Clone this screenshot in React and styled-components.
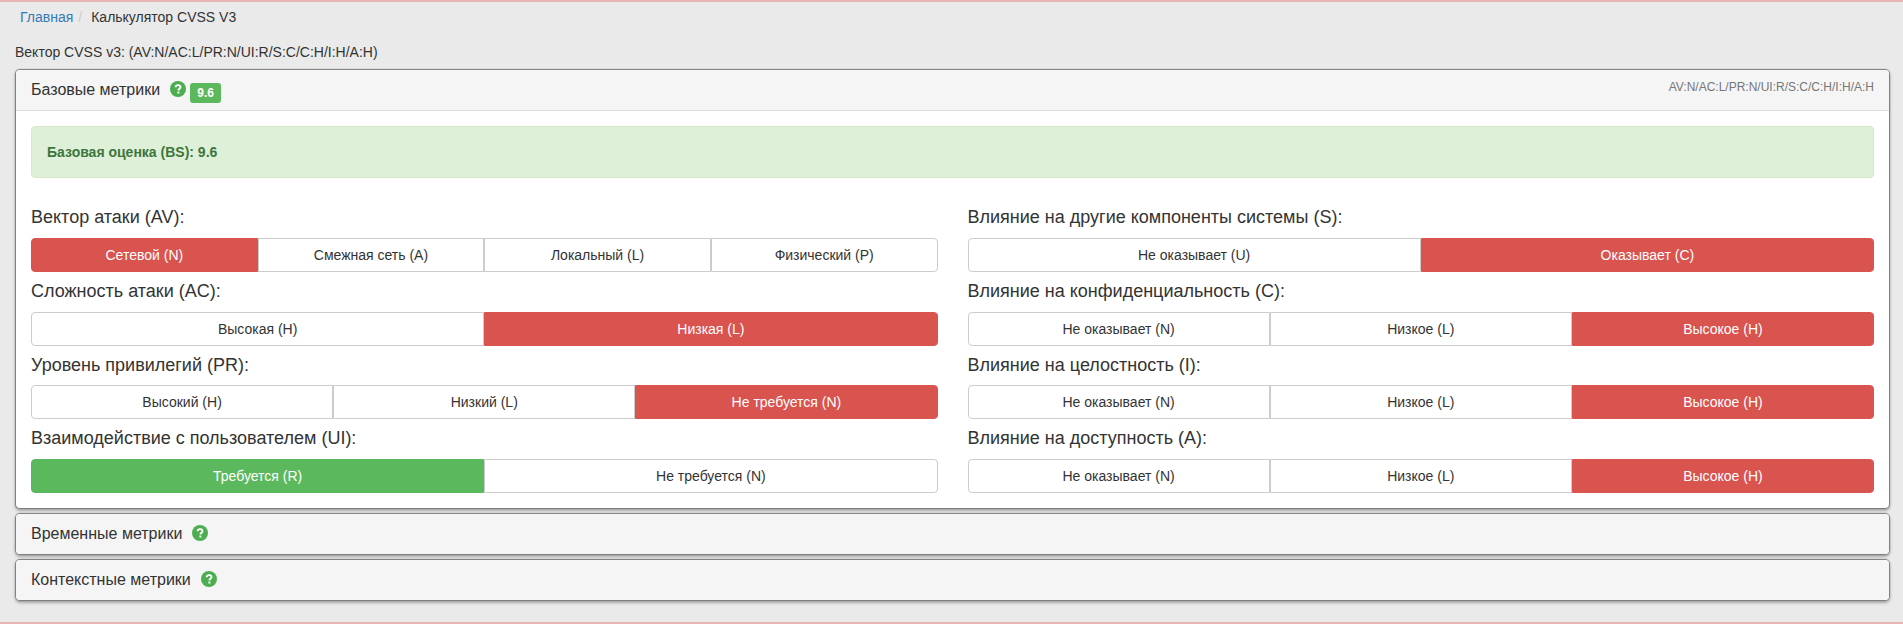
import React from "react";
import styled, { createGlobalStyle } from "styled-components";

const Global = createGlobalStyle`
  * { box-sizing: border-box; }
  html, body { margin: 0; padding: 0; }
  body {
    background: #eaeaea;
    font-family: "Liberation Sans", Arial, sans-serif;
    font-size: 14px;
    line-height: 20px;
    color: #333;
  }
`;

const Page = styled.div`
  height: 624px;
  overflow: hidden;
  border-top: 2px solid #e8b4b4;
  border-bottom: 2px solid #e8b4b4;
  padding: 0 14px 0 15px;
`;

const Breadcrumb = styled.nav`
  display: flex;
  align-items: center;
  height: 20px;
  margin-top: 5px;
  padding-left: 5px;
`;

const Crumb = styled.a`
  color: #337ab7;
  text-decoration: none;
`;

const Sep = styled.span`
  color: #ccc;
  padding: 0 5px;
`;

const Current = styled.span`
  color: #333;
  padding-left: 4px;
`;

const VectorLine = styled.div`
  height: 20px;
  margin: 15px 0 8px;
`;

const Panel = styled.section`
  margin-left: 1px;
  background: #fff;
  border-radius: 4px;
  box-shadow: 0 0 1px 1px #7c7c7c, 0 2px 3px 1px #a8a8a8;
  margin-bottom: ${(p) => p.$gap}px;
  overflow: hidden;
`;

const PanelHeader = styled.header`
  display: flex;
  justify-content: space-between;
  align-items: flex-start;
  background: #f5f5f5;
  height: ${(p) => p.$height}px;
  padding: 11px 15px 0;
  border-bottom: ${(p) => (p.$open ? "1px solid #ddd" : "none")};
`;

const TitleGroup = styled.div`
  display: flex;
  align-items: flex-start;
`;

const Title = styled.h3`
  margin: 0;
  font-size: 16px;
  font-weight: 400;
  line-height: 18px;
  color: #333;
`;

const Help = styled.svg`
  width: 16px;
  height: 16px;
  margin-left: 10px;
  flex: none;
`;

const Score = styled.span`
  display: inline-block;
  margin-left: 4px;
  margin-top: 2px;
  width: 31px;
  height: 20px;
  background: #5cb85c;
  color: #fff;
  border-radius: 3px;
  font-size: 12px;
  font-weight: 700;
  line-height: 20px;
  text-align: center;
`;

const VectorTag = styled.small`
  font-size: 12px;
  line-height: 16px;
  margin-top: -2px;
  color: #777;
`;

const PanelBody = styled.div`
  padding: 15px;
`;

const Alert = styled.div`
  height: 52px;
  padding: 15px;
  background: #dff0d8;
  border: 1px solid #d6e9c6;
  border-radius: 4px;
  color: #3c763d;
  font-size: 14px;
  font-weight: 700;
  line-height: 20px;
`;

const Grid = styled.div`
  display: grid;
  grid-template-columns: 1fr 1fr;
  column-gap: 30px;
  margin-top: 20px;
`;

const Column = styled.div`
  min-width: 0;
`;

const MetricLabel = styled.h4`
  margin: 10px 0;
  font-size: 18px;
  font-weight: 400;
  line-height: 19.8px;
  color: #333;
`;

const Group = styled.div`
  display: flex;
`;

const Choice = styled.button`
  flex: 1 1 0;
  min-width: 0;
  height: 34px;
  padding: 6px 12px;
  font: inherit;
  font-size: 14px;
  line-height: 20px;
  cursor: pointer;
  color: ${(p) => (p.$tone ? "#fff" : "#333")};
  background: ${(p) => (p.$tone === "red" ? "#d9534f" : p.$tone === "green" ? "#5cb85c" : "#fff")};
  border: 1px solid ${(p) => (p.$tone === "red" ? "#d9534f" : p.$tone === "green" ? "#5cb85c" : "#ccc")};
  &:first-child {
    border-radius: 4px 0 0 4px;
  }
  &:last-child {
    border-radius: 0 4px 4px 0;
  }
`;

const HelpIcon = () => (
  <Help viewBox="0 0 16 16" aria-hidden="true">
    <circle cx="8" cy="8" r="8" fill="#4cae50" />
    <path
      d="M5.6 6.3c.1-1.4 1.1-2.2 2.5-2.2s2.4.8 2.4 2c0 .9-.5 1.4-1.2 1.8-.6.4-.8.6-.8 1.2v.3"
      fill="none"
      stroke="#fff"
      strokeWidth="1.9"
    />
    <rect x="7.4" y="10.6" width="2" height="1.9" fill="#fff" />
  </Help>
);

const left = [
  { label: "Вектор атаки (AV):", options: [["Сетевой (N)", "red"], ["Смежная сеть (A)"], ["Локальный (L)"], ["Физический (P)"]] },
  { label: "Сложность атаки (AC):", options: [["Высокая (H)"], ["Низкая (L)", "red"]] },
  { label: "Уровень привилегий (PR):", options: [["Высокий (H)"], ["Низкий (L)"], ["Не требуется (N)", "red"]] },
  { label: "Взаимодействие с пользователем (UI):", options: [["Требуется (R)", "green"], ["Не требуется (N)"]] },
];

const impact = [["Не оказывает (N)"], ["Низкое (L)"], ["Высокое (H)", "red"]];

const right = [
  { label: "Влияние на другие компоненты системы (S):", options: [["Не оказывает (U)"], ["Оказывает (C)", "red"]] },
  { label: "Влияние на конфиденциальность (C):", options: impact },
  { label: "Влияние на целостность (I):", options: impact },
  { label: "Влияние на доступность (A):", options: impact },
];

const Metric = ({ label, options }) => (
  <>
    <MetricLabel>{label}</MetricLabel>
    <Group>
      {options.map(([text, tone]) => (
        <Choice key={text} $tone={tone}>{text}</Choice>
      ))}
    </Group>
  </>
);

export default function App() {
  return (
    <>
      <Global />
      <Page>
        <Breadcrumb>
          <Crumb href="#">Главная</Crumb>
          <Sep>/</Sep>
          <Current>Калькулятор CVSS V3</Current>
        </Breadcrumb>
        <VectorLine>Вектор CVSS v3: (AV:N/AC:L/PR:N/UI:R/S:C/C:H/I:H/A:H)</VectorLine>
        <Panel $gap={6}>
          <PanelHeader $open $height={41}>
            <TitleGroup>
              <Title>Базовые метрики</Title>
              <HelpIcon />
              <Score>9.6</Score>
            </TitleGroup>
            <VectorTag>AV:N/AC:L/PR:N/UI:R/S:C/C:H/I:H/A:H</VectorTag>
          </PanelHeader>
          <PanelBody>
            <Alert>Базовая оценка (BS): 9.6</Alert>
            <Grid>
              <Column>{left.map((m) => <Metric key={m.label} {...m} />)}</Column>
              <Column>{right.map((m) => <Metric key={m.label} {...m} />)}</Column>
            </Grid>
          </PanelBody>
        </Panel>
        <Panel $gap={6}>
          <PanelHeader $height={40}>
            <TitleGroup>
              <Title>Временные метрики</Title>
              <HelpIcon />
            </TitleGroup>
          </PanelHeader>
        </Panel>
        <Panel $gap={0}>
          <PanelHeader $height={40}>
            <TitleGroup>
              <Title>Контекстные метрики</Title>
              <HelpIcon />
            </TitleGroup>
          </PanelHeader>
        </Panel>
      </Page>
    </>
  );
}
